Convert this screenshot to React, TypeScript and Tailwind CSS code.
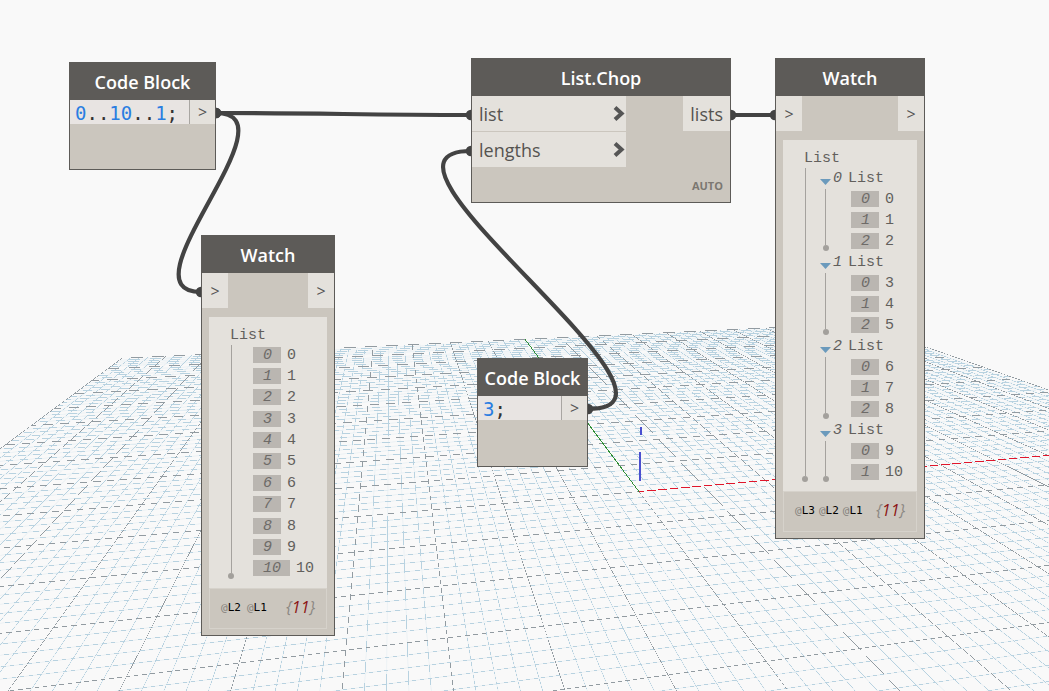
import React from "react";

type Point = [number, number];

/* ---------- perspective ground grid ---------- */

const ORIGIN: Point = [639, 491.6];
const VANISH_U: Point = [4445, 155];
const VANISH_V: Point = [390, 159];
const SCALE_U = 0.0172;
const SCALE_V = 0.0845;
const EXTENT = 10;
const MIN_W = 0.12;

const depth = (u: number, v: number) => 1 + SCALE_U * u + SCALE_V * v;

function project(u: number, v: number): Point {
  const w = depth(u, v);
  const at = (i: 0 | 1) =>
    (ORIGIN[i] + SCALE_U * u * VANISH_U[i] + SCALE_V * v * VANISH_V[i]) / w;
  return [at(0), at(1)];
}

/* A grid line as a thin filled quad, so unsmoothed edges break it into dashes. */
function strip(u1: number, v1: number, u2: number, v2: number, width: number): string {
  const w1 = depth(u1, v1);
  const w2 = depth(u2, v2);
  let [su, sv] = [u1, v1];
  if (w2 < MIN_W) return "";
  if (w1 < MIN_W) {
    const t = (MIN_W - w1) / (w2 - w1);
    su = u1 + (u2 - u1) * t;
    sv = v1 + (v2 - v1) * t;
  }
  const [ax, ay] = project(su, sv);
  const [bx, by] = project(u2, v2);
  const len = Math.hypot(bx - ax, by - ay);
  const nx = ((by - ay) / len) * (width / 2);
  const ny = (-(bx - ax) / len) * (width / 2);
  const p = (x: number, y: number) => `${x.toFixed(3)} ${y.toFixed(3)}`;
  return `M${p(ax + nx, ay + ny)}L${p(bx + nx, by + ny)}L${p(bx - nx, by - ny)}L${p(ax - nx, ay - ny)}Z`;
}

function gridPath(major: boolean, width: number): string {
  const parts: string[] = [];
  for (let i = -EXTENT * 5; i <= EXTENT * 5; i++) {
    if ((i % 5 === 0) !== major) continue;
    const k = i / 5;
    parts.push(strip(-EXTENT, k, EXTENT, k, width));
    parts.push(strip(k, -EXTENT, k, EXTENT, width));
  }
  return parts.join("");
}

const MINOR = gridPath(false, 0.5);
const MAJOR = gridPath(true, 0.55);

function Ground() {
  return (
    <g>
      <path d={MINOR} fill="#b4d4e6" opacity="0.35" />
      <g shapeRendering="crispEdges">
        <path d={MINOR} fill="#b8d2e0" />
        <path d={MAJOR} fill="#929ba1" />
        <path d={strip(0, 0, EXTENT, 0, 0.75)} fill="#e0162b" />
        <path d={strip(0, 0, 0, EXTENT, 0.9)} fill="#2f8f35" />
        <path d="M639 452h2v29h-2zM640 427h2v8h-2z" fill="#4a4fd0" />
      </g>
    </g>
  );
}

/* ---------- wires ---------- */

function Wire({ from, to, bend }: { from: Point; to: Point; bend: number }) {
  const d = `M${from[0]} ${from[1]}C${from[0] + bend} ${from[1]} ${to[0] - bend} ${to[1]} ${to[0]} ${to[1]}`;
  return (
    <g>
      <path d={d} fill="none" stroke="#434343" strokeWidth="4.2" />
      <circle cx={from[0]} cy={from[1]} r="5.3" fill="#434343" />
      <circle cx={to[0]} cy={to[1]} r="5.3" fill="#434343" />
    </g>
  );
}

/* ---------- node parts ---------- */

function Node({
  title,
  place,
  children,
}: {
  title: string;
  place: string;
  children: React.ReactNode;
}) {
  return (
    <section
      className={`absolute flex flex-col border border-[#5d5b58] bg-[#cbc6be] ${place}`}
    >
      <h2 className="flex h-[37px] shrink-0 items-center justify-center bg-[#5d5b58] text-lg font-semibold whitespace-nowrap text-white">
        {title}
      </h2>
      {children}
    </section>
  );
}

function PortArrow() {
  return (
    <button
      aria-label="Port"
      className="flex h-[35px] w-[26px] items-center justify-center bg-[#e4e1dc] text-base text-[#555]"
    >
      &gt;
    </button>
  );
}

function CodeBlock({ place, children }: { place: string; children: React.ReactNode }) {
  return (
    <Node title="Code Block" place={place}>
      <div className="flex h-6 items-stretch">
        <code className="flex flex-1 items-center bg-[#e8e4e2] pt-px pl-[5px] font-['DejaVu_Sans_Mono',monospace] text-[19px] leading-6 text-[#333]">
          {children}
        </code>
        <button
          aria-label="Output"
          className="flex w-[26px] items-center justify-center border-l border-[#a9a6a2] bg-[#e4e1dc] text-base text-[#555]"
        >
          &gt;
        </button>
      </div>
    </Node>
  );
}

function Num({ children }: { children: React.ReactNode }) {
  return <span className="text-[#2a7de1]">{children}</span>;
}

function InputPort({ label }: { label: string }) {
  return (
    <button className="flex h-[35px] w-full items-center justify-between bg-[#e4e1dc] pr-px pl-[7px]">
      <span>{label}</span>
      <svg width="12" height="16" viewBox="0 0 12 16">
        <path d="M2 1.5L8.6 7.5L2 13.5" fill="none" stroke="#555" strokeWidth="4" />
      </svg>
    </button>
  );
}

function Rail() {
  return (
    <div className="flex w-[6px] flex-1 flex-col items-center">
      <div className="w-px flex-1 bg-[#a5a29e]" />
      <div className="size-[6px] rounded-full bg-[#a3a09c]" />
    </div>
  );
}

function Item({ index, value }: { index: number; value: number }) {
  return (
    <li className="flex min-h-[21px] flex-1 items-center gap-[6px]">
      <span className="h-4 bg-[#bab6b1] pr-[9px] pl-[10px] leading-[18px] text-[#6e6b68] italic">
        {index}
      </span>
      <span className="h-4 leading-[18px]">{value}</span>
    </li>
  );
}

function Group({ index, values }: { index: number; values: number[] }) {
  return (
    <li className="flex">
      <div className="flex w-[11px] flex-col items-center gap-1 pt-3">
        <button aria-label={`Toggle list ${index}`} className="block">
          <svg width="11" height="6" viewBox="0 0 11 6" className="block">
            <path d="M0 0H11L5.5 6Z" fill="#6b9abc" />
          </svg>
        </button>
        <Rail />
      </div>
      <div className="pl-[2px]">
        <div className="flex h-[21px] items-center gap-[6px] pt-[2px] leading-4">
          <span className="italic">{index}</span>
          <span>List</span>
        </div>
        <ul className="flex flex-col pl-[18px]">
          {values.map((v, i) => (
            <Item key={v} index={i} value={v} />
          ))}
        </ul>
      </div>
    </li>
  );
}

function Watch({
  place,
  levels,
  count,
  children,
}: {
  place: string;
  levels: React.ReactNode;
  count: number;
  children: React.ReactNode;
}) {
  return (
    <Node title="Watch" place={place}>
      <div className="flex justify-between">
        <PortArrow />
        <PortArrow />
      </div>
      <div className="mx-[7px] mt-[9px] mb-[6px] font-['Liberation_Mono',monospace] text-[15px] text-[#625f5c]">
        <div className="bg-[#e4e1dc] pt-[7px] pb-[9px] pl-[19px]">
          <div className="flex h-5 items-center pt-1 pl-[2px] leading-4">List</div>
          <div className="flex">
            <div className="flex flex-col pt-px">
              <Rail />
            </div>
            {children}
          </div>
        </div>
        <div className="flex h-[41px] items-center justify-between border border-[#d6d2cb] pr-[11px] pb-[4px] pl-[11px] whitespace-nowrap">
          <div className="flex pt-1 font-['DejaVu_Sans_Mono',monospace] text-[11px] text-black">{levels}</div>
          <div className="font-['Open_Sans',sans-serif] text-base text-[#8b8883] italic">
            {"{"}
            <span className="text-[#8b1414]">{count}</span>
            {"}"}
          </div>
        </div>
      </div>
    </Node>
  );
}

function Level({ n }: { n: number }) {
  return (
    <span>
      <span className="text-[#85827d]">@</span>L{n}
    </span>
  );
}

export default function App() {
  return (
    <main className="relative min-h-screen overflow-hidden bg-[#f9f9f9] font-['Open_Sans',sans-serif]">
      <svg className="absolute inset-0 h-full w-full" aria-hidden="true">
        <Ground />
        <Wire from={[216, 113]} to={[471, 115]} bend={110} />
        <Wire from={[216, 113]} to={[201, 292]} bend={83} />
        <Wire from={[588, 409]} to={[471, 151]} bend={131} />
        <Wire from={[731, 115]} to={[775, 115]} bend={20} />
      </svg>

      <CodeBlock place="left-[69px] top-[62px] w-[147px] h-[108px]">
        <Num>0</Num>..<Num>10</Num>..<Num>1</Num>;
      </CodeBlock>

      <Node title="List.Chop" place="left-[471px] top-[58px] w-[260px] h-[145px]">
        <div className="flex flex-1 justify-between text-lg text-[#555350]">
          <div className="flex w-[154px] flex-col gap-px">
            <InputPort label="list" />
            <InputPort label="lengths" />
          </div>
          <div className="flex flex-col items-end justify-between">
            <button className="flex h-[35px] items-center bg-[#e4e1dc] px-[7px]">lists</button>
            <span className="pr-[7px] pb-2 text-[11px] leading-4 font-bold text-[#7b7771]">AUTO</span>
          </div>
        </div>
      </Node>

      <CodeBlock place="left-[477px] top-[358px] w-[111px] h-[109px]">
        <Num>3</Num>;
      </CodeBlock>

      <Watch
        place="left-[201px] top-[235px] w-[134px]"
        count={11}
        levels={
          <span className="flex gap-[6px]">
            <Level n={2} />
            <Level n={1} />
          </span>
        }
      >
        <ul className="flex h-[235px] flex-col pl-[19px]">
          {[0, 1, 2, 3, 4, 5, 6, 7, 8, 9, 10].map((v) => (
            <Item key={v} index={v} value={v} />
          ))}
        </ul>
      </Watch>

      <Watch
        place="left-[775px] top-[58px] w-[150px]"
        count={11}
        levels={
          <span className="flex gap-1">
            <Level n={3} />
            <Level n={2} />
            <Level n={1} />
          </span>
        }
      >
        <ul className="flex flex-col pl-3">
          <Group index={0} values={[0, 1, 2]} />
          <Group index={1} values={[3, 4, 5]} />
          <Group index={2} values={[6, 7, 8]} />
          <Group index={3} values={[9, 10]} />
        </ul>
      </Watch>
    </main>
  );
}
